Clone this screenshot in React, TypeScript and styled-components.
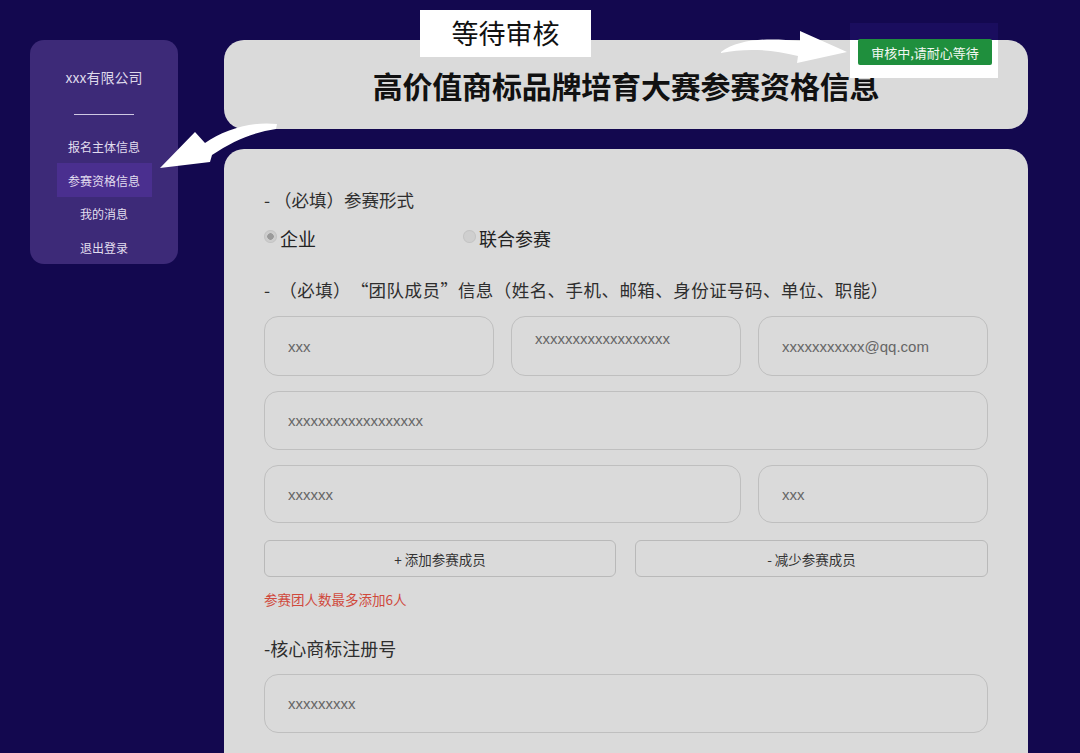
import React from "react";
import styled, { createGlobalStyle } from "styled-components";

const Global = createGlobalStyle`
  html, body { margin: 0; padding: 0; }
  body {
    background: #13084f;
    font-family: "Noto Sans CJK SC", "Noto Sans", sans-serif;
  }
  * { box-sizing: border-box; }
`;

const Page = styled.div`
  position: relative;
  width: 1080px;
  height: 753px;
  overflow: hidden;
  display: flex;
  align-items: flex-start;
  gap: 46px;
  padding: 40px 0 0 30px;
  background: #13084f;
`;

const Sidebar = styled.nav`
  width: 148px;
  height: 224px;
  border-radius: 14px;
  background: #3d2a78;
  display: flex;
  flex-direction: column;
  align-items: center;
  padding-top: 27px;
`;

const Company = styled.div`
  font-size: 14px;
  line-height: 20px;
  color: #ddd8ea;
`;

const Divider = styled.div`
  width: 60px;
  height: 1px;
  background: #cfc8e3;
  margin: 27px 0 15px;
`;

const MenuItem = styled.div<{ $active?: boolean }>`
  width: 95px;
  height: 34px;
  display: flex;
  align-items: center;
  justify-content: center;
  font-size: 12px;
  color: #e2deef;
  background: ${(p) => (p.$active ? "#4a2f8f" : "transparent")};
`;

const Main = styled.div`
  width: 804px;
  display: flex;
  flex-direction: column;
  gap: 20px;
`;

const HeaderCard = styled.header`
  height: 89px;
  border-radius: 20px;
  background: #dadada;
  display: flex;
  align-items: center;
  justify-content: center;
  padding-top: 1px;
`;

const Title = styled.h1`
  margin: 0;
  font-size: 30px;
  font-weight: 700;
  color: #111;
  letter-spacing: -0.2px;
`;

const FormCard = styled.section`
  border-radius: 20px;
  background: #dadada;
  padding: 39px 40px 60px;
  min-height: 640px;
`;

const Heading = styled.div<{ $size?: number; $mt?: number; $spacing?: number }>`
  font-size: ${(p) => p.$size ?? 17.5}px;
  line-height: 24px;
  color: #2e2e2e;
  margin-top: ${(p) => p.$mt ?? 0}px;
  letter-spacing: ${(p) => p.$spacing ?? 0}px;
`;

const Quote = styled.span<{ $align: "left" | "right" }>`
  display: inline-block;
  width: 1em;
  text-align: ${(p) => p.$align};
`;

const RadioRow = styled.div`
  display: flex;
  margin-top: 14px;
  height: 24px;
  align-items: center;
`;

const RadioOption = styled.label`
  width: 199px;
  display: flex;
  align-items: center;
  font-size: 18px;
  color: #222;
`;

const RadioDot = styled.span<{ $checked?: boolean }>`
  width: 13px;
  height: 13px;
  border-radius: 50%;
  margin: 0 3px 3px 0;
  background: ${(p) =>
    p.$checked
      ? "radial-gradient(circle, #9a9a9a 0 3px, #cdcdcd 3.5px)"
      : "#cfcfcf"};
  box-shadow: inset 0 0 0 1px #c4c4c4;
`;

const FieldGrid = styled.div`
  display: grid;
  grid-template-columns: repeat(3, 1fr);
  grid-template-rows: 60px 59px 58px;
  column-gap: 17px;
  row-gap: 15px;
  margin-top: 14px;
`;

const fieldBase = `
  width: 100%;
  height: 100%;
  border: 1.5px solid #bfbfbf;
  border-radius: 14px;
  background: transparent;
  font-family: "Liberation Sans", Arial, sans-serif;
  font-size: 15px;
  color: #666;
  outline: none;
  padding: 0 23px;
  margin: 0;
`;

const Field = styled.input<{ $span?: number }>`
  ${fieldBase}
  grid-column: span ${(p) => p.$span ?? 1};
  &::placeholder { color: #666; }
`;

const AreaField = styled.textarea`
  ${fieldBase}
  resize: none;
  padding-top: 13px;
  line-height: 18px;
  &::placeholder { color: #666; }
`;

const ButtonRow = styled.div`
  display: grid;
  grid-template-columns: 352px 353px;
  column-gap: 19px;
  margin-top: 17px;
`;

const GhostButton = styled.button`
  height: 37px;
  border: 1px solid #b9b9b9;
  border-radius: 6px;
  background: transparent;
  font-family: "Noto Sans CJK SC", sans-serif;
  font-size: 13.5px;
  color: #333;
  padding: 0;
`;

const Hint = styled.div`
  margin-top: 13px;
  font-size: 13.5px;
  line-height: 18px;
  color: #d0493c;
`;

const SingleField = styled.input`
  ${fieldBase}
  display: block;
  height: 59px;
  margin-top: 14px;
  &::placeholder { color: #666; }
`;

const Annotation = styled.div`
  position: absolute;
  left: 420px;
  top: 10px;
  width: 171px;
  height: 47px;
  background: #fff;
  display: flex;
  align-items: center;
  justify-content: center;
  font-size: 27px;
  color: #111;
  padding-bottom: 2px;
`;

const StatusHighlight = styled.div`
  position: absolute;
  left: 850px;
  top: 23px;
  width: 148px;
  height: 55px;
  background: linear-gradient(
    to bottom,
    #1a0d5e 0,
    #1a0d5e 17px,
    #ffffff 17px,
    #ffffff 100%
  );
`;

const StatusBadge = styled.div`
  position: absolute;
  left: 8px;
  top: 16px;
  width: 134px;
  height: 26px;
  border-radius: 2px;
  background: #1f8f3d;
  color: #f2f7f2;
  font-size: 13px;
  display: flex;
  align-items: center;
  justify-content: center;
`;

const Arrows = styled.svg`
  position: absolute;
  left: 0;
  top: 0;
  pointer-events: none;
`;

export default function App() {
  return (
    <>
      <Global />
      <Page>
        <Sidebar>
          <Company>xxx有限公司</Company>
          <Divider />
          <MenuItem>报名主体信息</MenuItem>
          <MenuItem $active>参赛资格信息</MenuItem>
          <MenuItem>我的消息</MenuItem>
          <MenuItem>退出登录</MenuItem>
        </Sidebar>
        <Main>
          <HeaderCard>
            <Title>高价值商标品牌培育大赛参赛资格信息</Title>
          </HeaderCard>
          <FormCard>
            <Heading>-&nbsp;（必填）参赛形式</Heading>
            <RadioRow>
              <RadioOption>
                <RadioDot $checked />
                企业
              </RadioOption>
              <RadioOption>
                <RadioDot />
                联合参赛
              </RadioOption>
            </RadioRow>
            <Heading $mt={28} $spacing={0.45}>
              -&nbsp; （必填）<Quote $align="right">“</Quote>团队成员
              <Quote $align="left">”</Quote>信息（姓名、手机、邮箱、身份证号码、单位、职能）
            </Heading>
            <FieldGrid>
              <Field placeholder="xxx" />
              <AreaField placeholder="xxxxxxxxxxxxxxxxxx" />
              <Field placeholder="xxxxxxxxxxx@qq.com" />
              <Field $span={3} placeholder="xxxxxxxxxxxxxxxxxx" />
              <Field $span={2} placeholder="xxxxxx" />
              <Field placeholder="xxx" />
            </FieldGrid>
            <ButtonRow>
              <GhostButton>+ 添加参赛成员</GhostButton>
              <GhostButton>- 减少参赛成员</GhostButton>
            </ButtonRow>
            <Hint>参赛团人数最多添加6人</Hint>
            <Heading $size={18} $mt={28}>
              -核心商标注册号
            </Heading>
            <SingleField placeholder="xxxxxxxxx" />
          </FormCard>
        </Main>

        <Annotation>等待审核</Annotation>
        <StatusHighlight>
          <StatusBadge>审核中,请耐心等待</StatusBadge>
        </StatusHighlight>
        <Arrows width="1080" height="753" viewBox="0 0 1080 753">
          <path
            d="M721,52 C740,38 770,38 800,41 L800,31 L847,52 L797,63 L798,56 C770,49 745,48 721,53 Z"
            fill="#fff"
          />
          <path
            d="M277,124 C250,121 224,130 205,143 L195,132 L160,168 L210,162 L212,155 C234,140 255,132 276,129 Z"
            fill="#fff"
          />
        </Arrows>
      </Page>
    </>
  );
}
